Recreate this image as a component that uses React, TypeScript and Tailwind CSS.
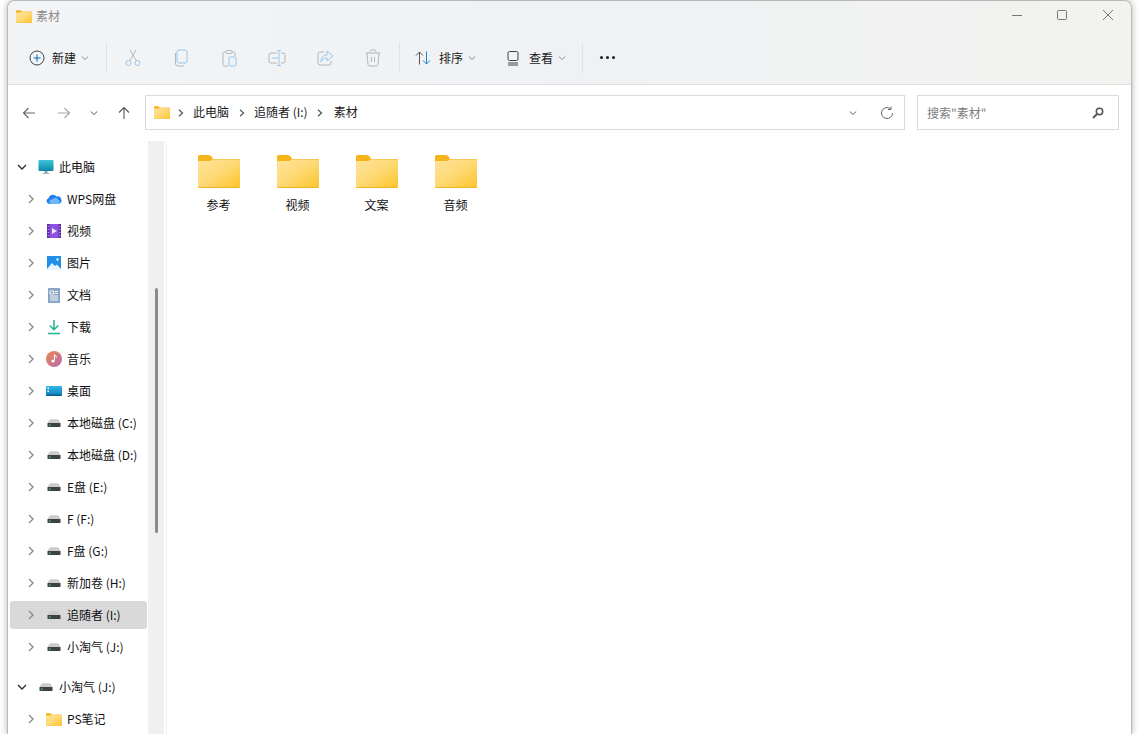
import type { ReactNode } from "react";

const font = "font-['Noto_Sans_CJK_SC','Liberation_Sans',sans-serif]";

function Folder({ w, h }: { w: number; h: number }) {
  return (
    <svg width={w} height={h} viewBox="0 0 42 33">
      <defs>
        <linearGradient id="folderFill" x1="0" y1="0" x2="1" y2="1">
          <stop offset="0" stopColor="#fee39b" />
          <stop offset="0.5" stopColor="#fed975" />
          <stop offset="1" stopColor="#fdc52c" />
        </linearGradient>
      </defs>
      <path d="M1.5 0H10c2 0 3 .8 4 2l1 2H40.500a1.500 1.500 0 0 1 1.500 1.500V10H0V1.500A1.500 1.500 0 0 1 1.500 0Z" fill="#f6b419" />
      <path d="M0 7.500C0 6.500.7 6 1.500 6H10c2 0 3.500-.5 4.500-2H40.500A1.500 1.500 0 0 1 42 5.500v26a1.500 1.500 0 0 1-1.500 1.500h-39A1.500 1.500 0 0 1 0 31.500Z" fill="#f0b42a" />
      <path d="M0 7.500C0 6.500.7 6 1.500 6H10c2 0 3.500-.5 4.500-1.500H40.500A1.500 1.500 0 0 1 42 6v24.500a1.500 1.500 0 0 1-1.500 1.500h-39A1.500 1.500 0 0 1 0 30.500Z" fill="url(#folderFill)" />
    </svg>
  );
}

function Drive() {
  return (
    <svg width="16" height="16" viewBox="0 0 16 16">
      <path d="M3 5.500C3.500 4.500 4.500 4.200 5.500 4.200h5c1 0 2 .3 2.500 1.300L14.500 9h-13Z" fill="#c9ccce" />
      <rect x="1.500" y="8" width="13" height="4" rx=".5" fill="#3f4245" />
      <rect x="3" y="9.500" width="1.500" height="1.300" fill="#35e04a" />
    </svg>
  );
}

function Chevron({ open }: { open?: boolean }) {
  return (
    <svg width="10" height="10" viewBox="0 0 10 10" fill="none" stroke={open ? "#333" : "#8b8b8b"} strokeWidth="1.400">
      {open ? <path d="M1 3l4 4 4-4" /> : <path d="M3 1l4 4-4 4" />}
    </svg>
  );
}

function SmallChevron({ color = "#8f8f8f" }: { color?: string }) {
  return (
    <svg width="8" height="8" viewBox="0 0 8 8" fill="none" stroke={color} strokeWidth="1">
      <path d="M.800 2.500 4 5.500l3.200-3" />
    </svg>
  );
}

function Crumb() {
  return (
    <svg width="6" height="8" viewBox="0 0 6 8" fill="none" stroke="#555" strokeWidth="1.200">
      <path d="M1 .800 4.500 4 1 7.200" />
    </svg>
  );
}

const pcIcon = (
  <svg width="16" height="16" viewBox="0 0 16 16">
    <defs>
      <linearGradient id="pc" x1="0" y1="0" x2="0" y2="1">
        <stop offset="0" stopColor="#3cc6d8" />
        <stop offset="1" stopColor="#0f86a8" />
      </linearGradient>
    </defs>
    <rect x=".500" y="1" width="15" height="11" rx="1" fill="url(#pc)" />
    <rect x="6.500" y="12" width="3" height="2" fill="#8ba2ae" />
    <rect x="4.500" y="14" width="7" height="1" fill="#a7b6be" />
  </svg>
);

const cloudIcon = (
  <svg width="16" height="16" viewBox="0 0 16 16">
    <path d="M3.500 13a3 3 0 0 1-1-5.800A4.500 4.500 0 0 1 10.500 5.500 3.800 3.800 0 0 1 12.500 13Z" fill="#1f7ff0" />
    <path d="M6.500 8.500a3 3 0 0 1 5.500 0A2.500 2.500 0 0 1 12.500 13H5a2.200 2.200 0 0 1 1.500-4.500Z" fill="#6cb8fb" />
  </svg>
);

const videoIcon = (
  <svg width="16" height="16" viewBox="0 0 16 16">
    <rect x="1" y="1" width="14" height="14" rx="1" fill="#8f52e0" />
    <rect x="1" y="1" width="2.500" height="14" fill="#5d2ea8" />
    <rect x="12.500" y="1" width="2.500" height="14" fill="#5d2ea8" />
    <path d="M1.700 3.500h1.200M1.700 6.500h1.200M1.700 9.500h1.200M1.700 12.500h1.200M13.100 3.500h1.200M13.100 6.500h1.200M13.100 9.500h1.200M13.100 12.500h1.200" stroke="#c9a8f5" strokeWidth="1" />
    <path d="M6 5l5 3-5 3Z" fill="#f0e4ff" />
  </svg>
);

const pictureIcon = (
  <svg width="16" height="16" viewBox="0 0 16 16">
    <rect x="1" y="1" width="14" height="14" fill="#1f8fe8" />
    <path d="M1 14l5-6 3 3 2-1.500 4 4.500v1H1Z" fill="#e9f5fe" />
    <circle cx="11.500" cy="4.500" r="1.200" fill="#e9f5fe" />
  </svg>
);

const docIcon = (
  <svg width="16" height="16" viewBox="0 0 16 16">
    <rect x="2" y="1" width="12" height="15" rx=".5" fill="#8ba6c4" />
    <path d="M4 4h3.500v3H4ZM8.500 4.500H12M8.500 6.500H12M4 9h8M4 11h8M4 13h8" stroke="#f4f7fa" strokeWidth="1" fill="none" />
  </svg>
);

const downloadIcon = (
  <svg width="16" height="16" viewBox="0 0 16 16" fill="none" stroke="#1fb58f" strokeWidth="1.500">
    <path d="M8 1v9.500M3.800 6.500 8 10.700l4.200-4.200" />
    <path d="M2 14.500h12" />
  </svg>
);

const musicIcon = (
  <svg width="16" height="16" viewBox="0 0 16 16">
    <defs>
      <linearGradient id="music" x1="0" y1="0" x2="1" y2="1">
        <stop offset="0" stopColor="#f08a48" />
        <stop offset="1" stopColor="#b667b8" />
      </linearGradient>
    </defs>
    <circle cx="8" cy="8" r="8" fill="url(#music)" />
    <path d="M8.500 3.500v6" stroke="#fff" strokeWidth="1.100" />
    <path d="M8.500 3.500c.5 1.500 2 1.500 2 3" stroke="#fff" strokeWidth="1" fill="none" />
    <circle cx="7" cy="10" r="1.600" fill="#fff" />
  </svg>
);

const desktopIcon = (
  <svg width="16" height="16" viewBox="0 0 16 16">
    <defs>
      <linearGradient id="desk" x1="0" y1="0" x2="0" y2="1">
        <stop offset="0" stopColor="#35b5e6" />
        <stop offset="1" stopColor="#0d7fb8" />
      </linearGradient>
    </defs>
    <rect x="0" y="3" width="16" height="10" rx=".5" fill="url(#desk)" />
    <rect x="1.500" y="4.500" width="1.500" height="1.500" fill="#fff" />
    <rect x="1.500" y="7.500" width="1.500" height="1.500" fill="#fff" />
    <rect x="1" y="11.500" width="14" height="1.500" fill="#0b5c86" />
  </svg>
);

const drive = <Drive />;

type TreeRow = { label: string; icon: ReactNode; top?: boolean; selected?: boolean };

const tree: TreeRow[] = [
  { label: "此电脑", icon: pcIcon, top: true },
  { label: "WPS网盘", icon: cloudIcon },
  { label: "视频", icon: videoIcon },
  { label: "图片", icon: pictureIcon },
  { label: "文档", icon: docIcon },
  { label: "下载", icon: downloadIcon },
  { label: "音乐", icon: musicIcon },
  { label: "桌面", icon: desktopIcon },
  { label: "本地磁盘 (C:)", icon: drive },
  { label: "本地磁盘 (D:)", icon: drive },
  { label: "E盘 (E:)", icon: drive },
  { label: "F (F:)", icon: drive },
  { label: "F盘 (G:)", icon: drive },
  { label: "新加卷 (H:)", icon: drive },
  { label: "追随者 (I:)", icon: drive, selected: true },
  { label: "小淘气 (J:)", icon: drive },
];

function Row({ row }: { row: TreeRow }) {
  return (
    <div className="h-8 flex items-center pl-[2px] w-[140px] shrink-0">
      <div className={`h-7 w-[137px] flex items-center rounded-[3px] ${row.selected ? "bg-[#d9d9d9]" : ""} ${row.top ? "pl-[7px]" : "pl-4"}`}>
        <span className="w-[10px] flex justify-center shrink-0">
          <Chevron open={row.top} />
        </span>
        <span className={`w-4 flex justify-center shrink-0 ${row.top ? "ml-[11px]" : "ml-[10px]"}`}>{row.icon}</span>
        <span className="ml-[5px] text-xs text-[#111111] whitespace-nowrap">{row.label}</span>
      </div>
    </div>
  );
}

const grayIcon = { fill: "none", stroke: "#b4b7ba", strokeWidth: 1 };
const blueStroke = "#9cc6ea";

function ToolIcon({ children }: { children: ReactNode }) {
  return (
    <div className="w-12 flex justify-center shrink-0">
      <svg width="18" height="18" viewBox="0 0 18 18" {...grayIcon}>
        {children}
      </svg>
    </div>
  );
}

function Divider({ ml, mr }: { ml: string; mr: string }) {
  return <div className={`w-px h-[31px] bg-[#e1e2e4] shrink-0 ${ml} ${mr}`} />;
}

const items = ["参考", "视频", "文案", "音频"];

export default function App() {
  return (
    <div className={`w-[1139px] h-[734px] overflow-hidden bg-white pl-[7px] pr-[7px] ${font}`}>
      <div className="h-[734px] flex flex-col border-t border-x border-[#b9b9b9] rounded-t-lg overflow-hidden bg-white shadow-[0_0_7px_rgba(0,0,0,0.3)]">
        <div className="h-[84px] shrink-0 bg-gradient-to-r from-[#f3f4f6] via-[#eff1f4] to-[#f2f2ef] border-b border-[#e0e0e0]">
          <div className="h-[30px] flex items-center pl-2">
            <Folder w={16} h={13} />
            <span className="ml-1 text-xs text-[#8a8a8a]">素材</span>
            <div className="ml-auto flex items-center pr-[18px] pb-[2px] gap-[35px]">
              <svg width="10" height="10" viewBox="0 0 10 10" stroke="#777" fill="none"><path d="M0 5.500h10" /></svg>
              <svg width="10" height="10" viewBox="0 0 10 10" stroke="#777" fill="none"><rect x=".5" y=".5" width="9" height="9" rx="1" /></svg>
              <svg className="ml-px" width="10" height="10" viewBox="0 0 10 10" stroke="#777" fill="none"><path d="M0 0l10 10M10 0 0 10" /></svg>
            </div>
          </div>
          <div className="h-[53px] flex items-center pl-[21px]">
            <svg width="16" height="16" viewBox="0 0 16 16" fill="none">
              <circle cx="8" cy="8" r="7" stroke="#444" strokeWidth="1" />
              <path d="M8 4.500v7M4.500 8h7" stroke="#0a6fc2" strokeWidth="1.100" />
            </svg>
            <span className="ml-[7px] text-xs text-[#1a1a1a]">新建</span>
            <span className="ml-[5px] flex"><SmallChevron /></span>
            <Divider ml="ml-[17px]" mr="mr-[2px]" />
            <ToolIcon>
              <circle cx="4.500" cy="14" r="2.500" stroke={blueStroke} />
              <circle cx="13.500" cy="14" r="2.500" stroke={blueStroke} />
              <path d="M5.500 12 12 1M12.500 12 6 1" />
            </ToolIcon>
            <ToolIcon>
              <rect x="5" y="1" width="10" height="13" rx="2" stroke={blueStroke} />
              <path d="M3.500 4v10.500A2.500 2.500 0 0 0 6 17h6" />
            </ToolIcon>
            <ToolIcon>
              <path d="M6 3H4.500A1.500 1.500 0 0 0 3 4.500v11A1.500 1.500 0 0 0 4.500 17H8M12 3h1.500A1.500 1.500 0 0 1 15 4.500V7" />
              <rect x="6" y="1.500" width="6" height="3" rx="1" />
              <rect x="9" y="8" width="7" height="9" rx="1" stroke={blueStroke} />
            </ToolIcon>
            <ToolIcon>
              <path d="M9 4H3a2 2 0 0 0-2 2v6a2 2 0 0 0 2 2h6M13 4h2a2 2 0 0 1 2 2v6a2 2 0 0 1-2 2h-2" />
              <path d="M4 9h6M9 1.500h4M11 1.500v15M9 16.500h4" stroke={blueStroke} />
            </ToolIcon>
            <ToolIcon>
              <path d="M8 3H4a2 2 0 0 0-2 2v9a2 2 0 0 0 2 2h9a2 2 0 0 0 2-2v-2" />
              <path d="M11 2l6 5-6 5V9c-3 0-5 1-6 4 0-4 2-7 6-7Z" stroke={blueStroke} />
            </ToolIcon>
            <ToolIcon>
              <path d="M1.500 4h15M6 4V2.500A1.500 1.500 0 0 1 7.500 1h3A1.500 1.500 0 0 1 12 2.500V4M3 4l1 11.500A2 2 0 0 0 6 17h6a2 2 0 0 0 2-1.500L15 4M7.500 8v5M10.500 8v5" />
            </ToolIcon>
            <Divider ml="ml-[2px]" mr="mr-[15px]" />
            <svg width="16" height="16" viewBox="0 0 16 16" fill="none" strokeWidth="1">
              <path d="M4.500 14.500V2M1 5.500l3.500-3.500L8 5.500" stroke="#555" />
              <path d="M11.500 1.500V14M8 10.500l3.500 3.500 3.500-3.500" stroke="#1a86d8" />
            </svg>
            <span className="ml-2 text-xs text-[#1a1a1a]">排序</span>
            <span className="ml-[5px] flex"><SmallChevron /></span>
            <svg className="ml-[29px]" width="16" height="16" viewBox="0 0 16 16" fill="none" stroke="#444">
              <rect x="3" y="1.500" width="10" height="9" rx="1.500" />
              <path d="M3 13h10M3 15h10" />
            </svg>
            <span className="ml-2 text-xs text-[#1a1a1a]">查看</span>
            <span className="ml-[5px] flex"><SmallChevron /></span>
            <Divider ml="ml-4" mr="mr-[17px]" />
            <div className="flex gap-[3px]">
              <span className="w-[3px] h-[3px] rounded-full bg-[#222]" />
              <span className="w-[3px] h-[3px] rounded-full bg-[#222]" />
              <span className="w-[3px] h-[3px] rounded-full bg-[#222]" />
            </div>
          </div>
        </div>

        <div className="h-[56px] shrink-0 flex items-start pt-[10px]">
          <div className="w-[137px] h-[35px] flex items-center shrink-0 pl-[14px]">
            <svg width="14" height="14" viewBox="0 0 14 14" fill="none" stroke="#666" strokeWidth="1.100">
              <path d="M13 7H1.500M6.500 2 1.500 7l5 5" />
            </svg>
            <svg className="ml-[21px]" width="14" height="14" viewBox="0 0 14 14" fill="none" stroke="#a6a6a6" strokeWidth="1.100">
              <path d="M1 7h11.500M7.500 2l5 5-5 5" />
            </svg>
            <span className="ml-[19px] flex"><SmallChevron color="#555" /></span>
            <svg className="ml-[19px]" width="14" height="14" viewBox="0 0 14 14" fill="none" stroke="#555" strokeWidth="1.100">
              <path d="M7 13V1.500M2 6.500l5-5 5 5" />
            </svg>
          </div>
          <div className="w-[760px] h-[35px] shrink-0 border border-[#dadada] flex items-center pl-2 pr-[10px]">
            <Folder w={16} h={13} />
            <span className="ml-2 flex"><Crumb /></span>
            <span className="ml-[9px] pb-[2px] text-xs text-[#1a1a1a]">此电脑</span>
            <span className="ml-[10px] flex"><Crumb /></span>
            <span className="ml-[9px] pb-[2px] text-xs text-[#1a1a1a]">追随者 (I:)</span>
            <span className="ml-[9px] flex"><Crumb /></span>
            <span className="ml-[11px] pb-[2px] text-xs text-[#1a1a1a]">素材</span>
            <span className="ml-auto flex"><SmallChevron color="#666" /></span>
            <svg className="ml-[23px]" width="14" height="14" viewBox="0 0 14 14" fill="none" stroke="#666" strokeWidth="1">
              <path d="M12.500 7A5.500 5.500 0 1 1 10.500 2.800M11 .5v3H8" />
            </svg>
          </div>
          <div className="ml-3 w-[202px] h-[35px] shrink-0 border border-[#dadada] flex items-center pl-[9px] pr-[14px]">
            <span className="text-xs text-[#7d7d7d]">搜索"素材"</span>
            <svg className="ml-auto" width="12" height="12" viewBox="0 0 12 12" fill="none" stroke="#555">
              <circle cx="7.500" cy="4.500" r="3.200" strokeWidth="1.500" />
              <path d="M5 7 1 11" strokeWidth="1.800" />
            </svg>
          </div>
        </div>

        <div className="flex-1 flex min-h-0">
          <div className="w-[140px] shrink-0 overflow-hidden pt-[10px] flex flex-col">
            {tree.map((row) => (
              <Row key={row.label} row={row} />
            ))}
            <div className="h-2 shrink-0" />
            <Row row={{ label: "小淘气 (J:)", icon: drive, top: true }} />
            <Row row={{ label: "PS笔记", icon: <Folder w={16} h={13} /> }} />
          </div>
          <div className="w-4 shrink-0 bg-[#f0f0f0] pt-[147px] pl-[7px]">
            <div className="w-[2.500px] h-[245px] bg-[#8a8a8a] rounded-full" />
          </div>
          <div className="w-[3px] shrink-0 border-r border-[#f0f0f0]" />
          <div className="flex-1 pt-[14px] pl-[12px] flex items-start">
            {items.map((name) => (
              <div key={name} className="w-[79px] flex flex-col items-center shrink-0">
                <Folder w={42} h={33} />
                <span className="mt-[9px] text-xs text-[#111111]">{name}</span>
              </div>
            ))}
          </div>
        </div>
      </div>
    </div>
  );
}
